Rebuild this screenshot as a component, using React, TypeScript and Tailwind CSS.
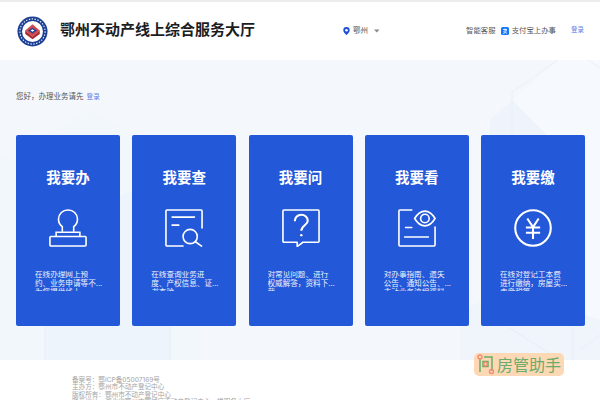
const sans = "font-['Inter','Noto_Sans_CJK_SC','Liberation_Sans',sans-serif]";

function Stamp() {
  return (
    <svg width="38" height="38" viewBox="0 0 40 40" fill="none" stroke="white" strokeWidth="1.700">
      <path d="M14 24v-5.500c-2.500-1.700-4-4.800-4-8A9.700 9.700 0 0 1 20 1a9.700 9.700 0 0 1 10 9.500c0 3.200-1.500 6.300-4 8V24" />
      <path d="M7.500 29v-4.500h25V29" />
      <rect x="1" y="29" width="38" height="10" rx="1" />
    </svg>
  );
}
function Search() {
  return (
    <svg width="38" height="38" viewBox="0 0 40 40" fill="none" stroke="white" strokeWidth="1.700" strokeLinecap="round">
      <path d="M19 39H2a1 1 0 0 1-1-1V2a1 1 0 0 1 1-1h36a1 1 0 0 1 1 1v18" />
      <path d="M7.500 8.500h23.500M7.500 17h7" />
      <circle cx="26.500" cy="29" r="7.500" />
      <path d="M32 34.500l6.500 4.500" />
    </svg>
  );
}
function Question() {
  return (
    <svg width="38" height="38" viewBox="0 0 40 40" fill="none" stroke="white" strokeWidth="1.700" strokeLinejoin="round">
      <path d="M2 1h36a1 1 0 0 1 1 1v32a1 1 0 0 1-1 1H22l-6 4.500V35H2a1 1 0 0 1-1-1V2a1 1 0 0 1 1-1z" />
      <path d="M13.500 13c0-4 3-7 6.800-7s6.800 2.800 6.800 6.300c0 4.700-6.800 5-6.800 10.700" strokeWidth="2.200" />
      <circle cx="20.300" cy="27.500" r="1.300" fill="white" stroke="none" />
    </svg>
  );
}
function Eye() {
  return (
    <svg width="38" height="38" viewBox="0 0 40 40" fill="none" stroke="white" strokeWidth="1.700" strokeLinecap="round">
      <path d="M14.500 1H2a1 1 0 0 0-1 1v36a1 1 0 0 0 1 1h36a1 1 0 0 0 1-1V19" />
      <path d="M17.500 10c3-5 7-7.800 10.800-7.800S36 5 39 10c-3 5-6.900 7.800-10.700 7.800S20.500 15 17.500 10z" />
      <circle cx="28.300" cy="10" r="4.500" />
      <path d="M8 19.500h6.500M7 29.500h25" />
    </svg>
  );
}
function Yuan() {
  return (
    <svg width="38" height="38" viewBox="0 0 40 40" fill="none" stroke="white" strokeWidth="2.200">
      <circle cx="20" cy="20" r="18.700" />
      <path d="M14 10l6 9 6-9M12.500 19.500h15M12.500 25h15M20 19v12.500" />
    </svg>
  );
}

const cards = [
  { t: "我要办", i: <Stamp />, l: ["在线办理网上预", "约、业务申请等不...", "为您提供线上"] },
  { t: "我要查", i: <Search />, l: ["在线查询业务进", "度、产权信息、证...", "书查验"] },
  { t: "我要问", i: <Question />, l: ["对常见问题、进行", "权威解答，资料下...", "载"] },
  { t: "我要看", i: <Eye />, l: ["对办事指南、遗失", "公告、通知公告、...", "主动业务流程资料"] },
  { t: "我要缴", i: <Yuan />, l: ["在线对登记工本费", "进行缴纳，房屋买...", "卖缴税等"] },
];

function Card({ t, i, l }: { t: string; i: React.ReactNode; l: string[] }) {
  return (
    <div className="w-[104px] h-[191px] shrink-0 bg-[#2358d8] rounded-[2px] flex flex-col items-center text-white">
      <div className="mt-[33px] h-[20px] text-[14.500px] leading-[20px] font-bold">{t}</div>
      <div className="mt-[21px] h-[38px]">{i}</div>
      <div className="mt-[24px] self-start ml-[19px] h-[19.500px] overflow-hidden text-[7.600px] leading-[8.800px] whitespace-nowrap text-[#eef3fd]">
        {l.map((x) => <div key={x}>{x}</div>)}
      </div>
    </div>
  );
}

function Logo() {
  return (
    <svg width="31" height="31" viewBox="0 0 32 32">
      <circle cx="16" cy="16" r="15.500" fill="#1c3f94" />
      <circle cx="16" cy="16" r="13" fill="none" stroke="#dfe6f5" strokeWidth="1.200" strokeDasharray="1.500 1.500" />
      <circle cx="16" cy="16" r="10.800" fill="white" />
      <path d="M16 8.500l7.500 6.500-7.500 6.500L8.500 15z" fill="#d04a4e" />
      <path d="M8.500 15v3.500l7.500 5.500 7.500-5.500V15L16 21.500z" fill="#a82c30" />
      <path d="M11.500 15l4.500-3 4.500 3-4.500 3z" fill="#1c3f94" />
      <path d="M14 15l2-1.300 2 1.300-2 1.300z" fill="white" />
    </svg>
  );
}

function Cubes() {
  return (
    <svg className="absolute inset-0 w-full h-full" viewBox="0 0 600 300" fill="none">
      <path d="M512 40l46-40h42v300H512z" fill="#f6f9fd" />
      <path d="M490 60l22-20 40 40v60h-62z" fill="#eff4fc" />
      <path d="M512 32L558 0M588 0l12 8M512 32v80" stroke="#e9f0f8" />
      <path d="M0 100l90-50 110 60v190H0z" fill="#f1f6fc" opacity="0.700" />
      <path d="M45 300V170l90-40 35 20v150z" fill="#ecf2fb" opacity="0.800" />
      <path d="M170 300V230M45 300V260" stroke="#e5edf8" />
      <path d="M460 300V250l50-20 90 30v40z" fill="#f0f5fc" />
      <path d="M510 268l50 32M600 275l-20 15M573 250v50" stroke="#e5edf8" />
    </svg>
  );
}

export default function App() {
  return (
    <div className={`relative w-[600px] h-[400px] overflow-hidden bg-white ${sans}`}>
      <header className="h-[60px] border-t-2 border-[#ececec] bg-white flex items-center pl-[17px] pr-[16px]">
        <Logo />
        <h1 className="ml-[12px] text-[15px] leading-[20px] font-bold text-[#1d1d1f] mb-[2px]">鄂州不动产线上综合服务大厅</h1>
        <div className="ml-[88px] flex items-center gap-[3px] text-[7.500px] text-[#555]">
          <svg width="7" height="8" viewBox="0 0 7 8"><path d="M3.500 0a3.200 3.200 0 0 1 3.200 3.200C6.700 5.300 3.500 8 3.500 8S.300 5.300.300 3.200A3.200 3.200 0 0 1 3.500 0z" fill="#1d4fd8" /><circle cx="3.500" cy="3.200" r="1.300" fill="white" /></svg>
          <span>鄂州</span>
          <svg className="ml-[3px]" width="6" height="4" viewBox="0 0 6 4"><path d="M0 .500h5.500L2.750 3.500z" fill="#888" /></svg>
        </div>
        <div className="ml-auto flex items-center text-[7.400px] text-[#555]">
          <span>智能客服</span>
          <span className="ml-[5px] w-[8px] h-[8px] rounded-[1.500px] bg-[#1677ff] flex items-center justify-center">
            <svg width="6" height="6" viewBox="0 0 6 6" fill="none" stroke="white" strokeWidth="0.800"><path d="M1 1.500h4M3 .500v2.500M1 5.500c1.800-.5 3-1.500 3.500-3.500M1.500 3.500c1 .2 2.500 1 3.500 2" /></svg>
          </span>
          <span className="ml-[3px]">支付宝上办事</span>
          <span className="ml-[15px] text-[6.500px] text-[#5d82e6]">登录</span>
        </div>
      </header>
      <main className="relative h-[300px] bg-[#f4f8fc] overflow-hidden">
        <Cubes />
        <div className="relative pl-[16px]">
          <p className="pt-[32px] h-[75px] text-[7.500px] leading-[10px] text-[#555]">
            您好，办理业务请先 <span className="ml-[1px] text-[6.600px] text-[#5d82e6]">登录</span>
          </p>
          <div className="flex gap-[12.250px]">
            {cards.map((c) => <Card key={c.t} {...c} />)}
          </div>
        </div>
      </main>
      <footer className="h-[40px] overflow-hidden bg-white pl-[72px] pt-[16.500px] text-[6.600px] leading-[7.500px] text-[#a3a3a3]">
        <div>备案号：鄂ICP备05007169号</div>
        <div>主办方：鄂州市不动产登记中心</div>
        <div>版权所有：鄂州市不动产登记中心</div>
        <div>联系地址：湖北省鄂州市鄂城区不动产登记中心一楼服务大厅</div>
      </footer>
      <div className="absolute left-[474px] top-[353px] w-[90px] h-[23px] rounded-[5px] bg-[#fdd8b5] flex items-center pl-[3px] text-[#6bab6b]">
        <svg width="17" height="21" viewBox="0 0 17 21" fill="none" stroke="#6bab6b" strokeWidth="1.500">
          <path d="M3 4v14M7 3h8v14" />
          <rect x="6" y="7.500" width="5" height="5" />
          <circle cx="3" cy="3" r="2" stroke="#f58e72" />
          <circle cx="8.500" cy="10" r="1.800" stroke="#f58e72" />
          <circle cx="14.500" cy="17.500" r="2" stroke="#f58e72" />
        </svg>
        <span className="ml-[3px] text-[16px] leading-[20px]">房管助手</span>
      </div>
    </div>
  );
}
